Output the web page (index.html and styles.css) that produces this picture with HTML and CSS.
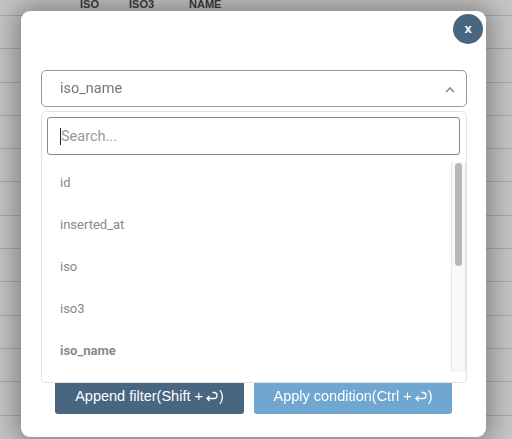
FILE: index.html
```html
<!DOCTYPE html>
<html>
<head>
<meta charset="utf-8">
<link rel="stylesheet" href="styles.css">
</head>
<body>
<div class="bg-table">
  <div class="bg-head">
    <span class="h-iso">ISO</span>
    <span class="h-iso3">ISO3</span>
    <span class="h-name">NAME</span>
  </div>
  <div class="bg-row"></div><div class="bg-row"></div><div class="bg-row"></div>
  <div class="bg-row"></div><div class="bg-row"></div><div class="bg-row"></div>
  <div class="bg-row"></div><div class="bg-row"></div><div class="bg-row"></div>
  <div class="bg-row"></div><div class="bg-row"></div><div class="bg-row"></div>
  <div class="bg-row"></div>
</div>

<div class="overlay">
  <div class="modal">
    <button class="close">x</button>
    <div class="select">
      <span class="select-value">iso_name</span>
      <svg class="chevron" width="10" height="6" viewBox="0 0 10 6"><path d="M1 5 L5 1 L9 5" fill="none" stroke="#8a8a8a" stroke-width="1.6"/></svg>
    </div>
    <div class="actions">
      <button class="btn btn-dark">Append filter(Shift + <svg class="ret" width="13" height="11" viewBox="0 0 13 11"><path d="M7.5 1.5 H9 A3 3 0 0 1 9 7.5 H2 M4.5 5 L2 7.5 L4.5 10" fill="none" stroke="#fff" stroke-width="1.3"/></svg>)</button>
      <button class="btn btn-light">Apply condition(Ctrl + <svg class="ret" width="13" height="11" viewBox="0 0 13 11"><path d="M7.5 1.5 H9 A3 3 0 0 1 9 7.5 H2 M4.5 5 L2 7.5 L4.5 10" fill="none" stroke="#fff" stroke-width="1.3"/></svg>)</button>
    </div>
    <div class="dropdown">
      <div class="search"><span class="caret"></span><span class="placeholder">Search...</span></div>
      <div class="list-wrap">
        <ul class="list">
          <li>id</li>
          <li>inserted_at</li>
          <li>iso</li>
          <li>iso3</li>
          <li class="selected">iso_name</li>
        </ul>
        <div class="scrollbar"><div class="thumb"></div></div>
      </div>
    </div>
  </div>
</div>
</body>
</html>
```
FILE: styles.css
```css
* { box-sizing: border-box; }
html, body { margin: 0; padding: 0; }
body {
  width: 512px;
  height: 439px;
  overflow: hidden;
  background: #c6c6c6;
  font-family: Roboto, "Liberation Sans", sans-serif;
}
.bg-head {
  margin-top: -7px;
  height: 23px;
  display: flex;
  align-items: center;
  font-family: "Liberation Sans", sans-serif;
  font-weight: bold;
  font-size: 11px;
  color: #3a3a3a;
  border-bottom: 1px solid #a9a9a9;
}
.h-iso { margin-left: 80px; width: 49px; }
.h-iso3 { width: 60px; }
.bg-row { height: 33.3px; border-bottom: 1px solid #a9a9a9; }

.overlay {
  position: fixed;
  inset: 0;
  padding: 11px 26px 2px 21px;
}
.modal {
  position: relative;
  width: 465px;
  height: 426px;
  background: #fff;
  border-radius: 9px;
  box-shadow: 0 0 26px 6px rgba(0,0,0,0.34);
  padding: 59px 19px 0 20px;
}
.close {
  position: absolute;
  top: 3px;
  right: 3px;
  width: 30px;
  height: 30px;
  border-radius: 50%;
  border: none;
  background: #48667f;
  color: #fff;
  font-family: "Liberation Sans", sans-serif;
  font-weight: bold;
  font-size: 13px;
  padding: 0 0 2px 0;
}
.select {
  height: 37px;
  border: 1px solid #999;
  border-radius: 5px;
  display: flex;
  align-items: center;
  justify-content: space-between;
  padding: 0 11px 0 18px;
}
.select-value { font-size: 14.5px; color: #777; }
.chevron { margin-top: 2px; }

.actions {
  display: flex;
  gap: 10px;
  padding: 0 14px;
  margin-top: 271px;
}
.btn {
  height: 36px;
  border: none;
  border-radius: 3px;
  color: #fff;
  font-family: "Liberation Sans", sans-serif;
  font-size: 14.5px;
  padding: 0;
  display: flex;
  align-items: center;
  justify-content: center;
}
.ret { margin: 0 1px 0 2px; }
.btn-dark { background: #48667f; width: 189px; }
.btn-light { background: #6fa7d1; width: 198px; }

.dropdown {
  position: absolute;
  left: 20px;
  top: 100px;
  width: 426px;
  height: 272px;
  background: #fff;
  border: 1px solid #e2e2e2;
  border-radius: 5px;
  padding: 5px 6px 10px 5px;
}
.search {
  height: 38px;
  border: 1px solid #888;
  border-radius: 3px;
  display: flex;
  align-items: center;
  padding-left: 12px;
}
.caret { width: 1px; height: 17px; background: #222; }
.placeholder { font-size: 14.5px; color: #9a9a9a; }
.list-wrap {
  margin-top: 7px;
  margin-right: -6px;
  margin-left: -5px;
  display: flex;
  height: 210px;
}
.list {
  list-style: none;
  margin: 0;
  padding: 0;
  flex: 1;
}
.list li {
  height: 42px;
  line-height: 42px;
  padding-left: 18px;
  font-size: 13px;
  color: #8a8a8a;
}
.list li.selected { font-weight: bold; }
.scrollbar {
  width: 15px;
  background: #f8f8f8;
  border-left: 1px solid #e6e6e6;
  border-right: 1px solid #e6e6e6;
  padding: 1px 3px;
}
.thumb {
  width: 7px;
  height: 103px;
  background: #b8b8b8;
  border-radius: 4px;
}
```
